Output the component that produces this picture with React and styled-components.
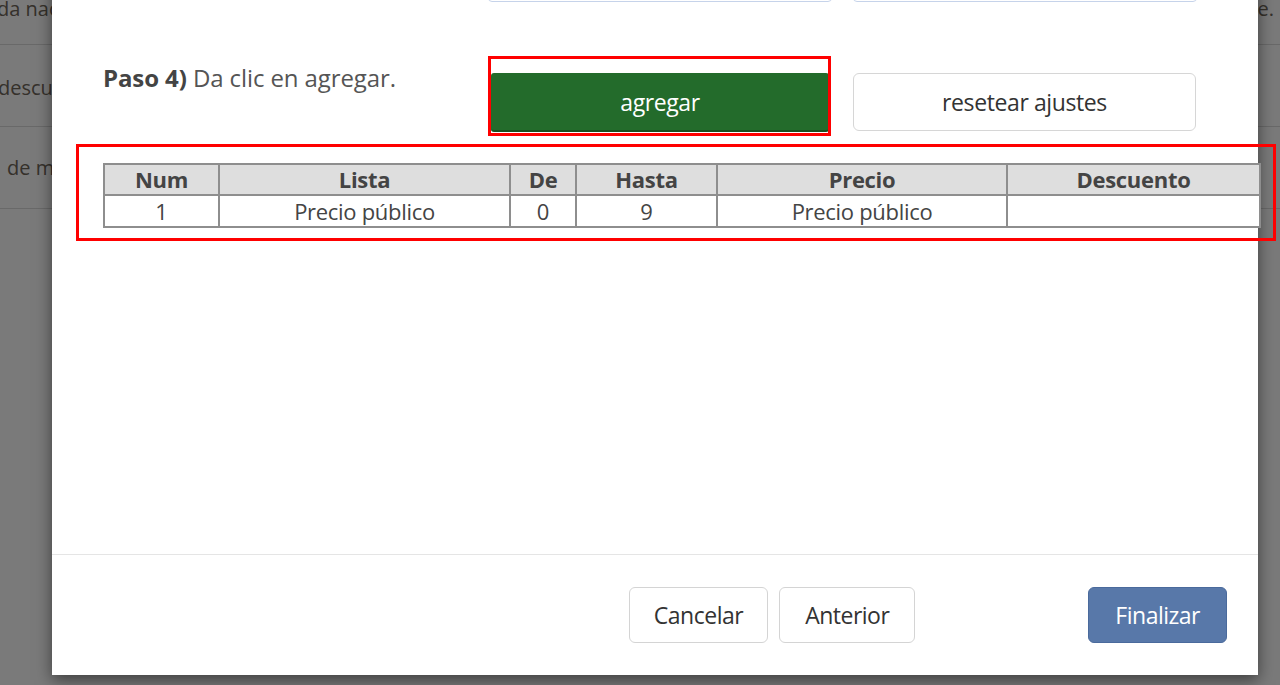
import React from "react";
import styled, { createGlobalStyle } from "styled-components";

const Global = createGlobalStyle`
  html, body { margin: 0; padding: 0; height: 100%; overflow: hidden; background: #fff; }
  body { font-family: "Open Sans", "DejaVu Sans", sans-serif; }
  #root { height: 100%; }
  * { box-sizing: border-box; }
`;

const Page = styled.div`
  position: relative;
  width: 1280px;
  height: 685px;
  overflow: hidden;
  background: #fff;
`;

const BgList = styled.div`
  display: flex;
  flex-direction: column;
  margin-top: -37px;
`;

const BgRow = styled.div`
  height: 82px;
  border-bottom: 1px solid #dcdcdc;
  display: flex;
  align-items: center;
  justify-content: space-between;
  padding-top: ${(p) => p.$shift || 0}px;
  font-size: 20px;
  color: #6f665a;
  white-space: nowrap;
`;

const BgLeft = styled.span`
  margin-left: ${(p) => p.$offset}px;
`;

const BgRight = styled.span`
  margin-right: 6px;
`;

const Overlay = styled.div`
  position: absolute;
  inset: 0;
  background: rgba(0, 0, 0, 0.52);
`;

const Modal = styled.div`
  position: absolute;
  left: 52px;
  top: -40px;
  width: 1206px;
  height: 715px;
  background: #fff;
  box-shadow: 0 5px 15px rgba(0, 0, 0, 0.5);
  display: flex;
  flex-direction: column;
`;

const Body = styled.div`
  flex: 1;
  padding-left: 51px;
`;

const StepGrid = styled.div`
  display: grid;
  grid-template-columns: 364px 344px 344px;
  column-gap: 21px;
  align-items: start;
  margin-top: ${(p) => p.$top || 0}px;
`;

const Input = styled.div`
  height: 42px;
  border: 1px solid #c6d3ea;
  border-radius: 4px;
  background: #fff;
  box-shadow: inset 0 1px 1px rgba(0, 0, 0, 0.05);
`;

const StepLabel = styled.div`
  font-size: 24px;
  line-height: 33px;
  color: #555;
  letter-spacing: -0.1px;
  b {
    color: #444;
    font-weight: 700;
  }
`;

const ButtonCell = styled.div`
  position: relative;
  padding: 12px ${(p) => p.$inset || 0}px 0;
`;

const Highlight = styled.span`
  position: absolute;
  top: ${(p) => p.$t}px;
  left: ${(p) => p.$l}px;
  right: ${(p) => p.$r}px;
  bottom: ${(p) => p.$b}px;
  border: 3px solid #ff0000;
  pointer-events: none;
`;

const AddButton = styled.button`
  display: block;
  width: 100%;
  height: 59px;
  border: none;
  border-bottom: 2px solid #1a5020;
  border-radius: 3px;
  background: #236b2b;
  color: #fff;
  font-family: inherit;
  font-size: 23px;
  letter-spacing: -0.4px;
`;

const ResetButton = styled.button`
  display: block;
  width: 343px;
  height: 58px;
  border: 1px solid #d6d6d6;
  border-radius: 6px;
  background: #fff;
  color: #333;
  font-family: inherit;
  font-size: 23px;
  letter-spacing: -0.4px;
`;

const TableWrap = styled.div`
  position: relative;
  width: 1156px;
  margin-top: 31px;
`;

const Table = styled.table`
  width: 1156px;
  border-collapse: collapse;
  table-layout: fixed;
  border: 2px solid #8e8e8e;
  font-size: 22px;
  color: #444;
  letter-spacing: -0.3px;
`;

const Th = styled.th`
  background: #dedede;
  border: 2px solid #8e8e8e;
  font-weight: 700;
  height: 31px;
  padding: 0;
  line-height: 27px;
  text-align: center;
`;

const Td = styled.td`
  background: #fff;
  border: 2px solid #8e8e8e;
  height: 32px;
  padding: 0;
  line-height: 28px;
  text-align: center;
`;

const Footer = styled.div`
  height: 121px;
  border-top: 1px solid #e5e5e5;
  padding: 32px 31px 0 0;
  display: flex;
  justify-content: flex-end;
  align-items: flex-start;
  gap: 11px;
`;

const FooterButton = styled.button`
  height: 56px;
  padding: 0 ${(p) => p.$pad}px;
  border-radius: 6px;
  border: 1px solid ${(p) => (p.$primary ? "#4a6a9c" : "#d4d4d4")};
  background: ${(p) => (p.$primary ? "#5878a9" : "#fff")};
  color: ${(p) => (p.$primary ? "#fff" : "#333")};
  font-family: inherit;
  font-size: 23px;
  letter-spacing: -0.5px;
  margin-left: ${(p) => p.$gapLeft || 0}px;
`;

const columns = [
  { key: "num", title: "Num", width: 115 },
  { key: "lista", title: "Lista", width: 291 },
  { key: "de", title: "De", width: 66 },
  { key: "hasta", title: "Hasta", width: 141 },
  { key: "precio", title: "Precio", width: 290 },
  { key: "desc", title: "Descuento", width: 253 },
];

const rows = [
  { num: "1", lista: "Precio público", de: "0", hasta: "9", precio: "Precio público", desc: "" },
];

export default function App() {
  return (
    <Page>
      <Global />
      <BgList>
        <BgRow $shift={10}>
          <BgLeft $offset={-3}>da nacional</BgLeft>
          <BgRight>e.</BgRight>
        </BgRow>
        <BgRow $shift={4}>
          <BgLeft $offset={-2}>descuento</BgLeft>
        </BgRow>
        <BgRow>
          <BgLeft $offset={7}>de mayoreo</BgLeft>
        </BgRow>
      </BgList>
      <Overlay />
      <Modal>
        <Body>
          <StepGrid>
            <div />
            <Input />
            <Input />
          </StepGrid>
          <StepGrid $top={59}>
            <StepLabel>
              <b>Paso 4)</b> Da clic en agregar.
            </StepLabel>
            <ButtonCell $inset={3}>
              <AddButton>agregar</AddButton>
              <Highlight $t={-5} $l={0} $r={1} $b={-4} />
            </ButtonCell>
            <ButtonCell>
              <ResetButton>resetear ajustes</ResetButton>
            </ButtonCell>
          </StepGrid>
          <TableWrap>
            <Table>
              <colgroup>
                {columns.map((c) => (
                  <col key={c.key} style={{ width: c.width }} />
                ))}
              </colgroup>
              <thead>
                <tr>
                  {columns.map((c) => (
                    <Th key={c.key}>{c.title}</Th>
                  ))}
                </tr>
              </thead>
              <tbody>
                {rows.map((r, i) => (
                  <tr key={i}>
                    {columns.map((c) => (
                      <Td key={c.key}>{r[c.key]}</Td>
                    ))}
                  </tr>
                ))}
              </tbody>
            </Table>
            <Highlight $t={-19} $l={-27} $r={-17} $b={-13} />
          </TableWrap>
        </Body>
        <Footer>
          <FooterButton $pad={24}>Cancelar</FooterButton>
          <FooterButton $pad={25}>Anterior</FooterButton>
          <FooterButton $pad={26} $primary $gapLeft={162}>
            Finalizar
          </FooterButton>
        </Footer>
      </Modal>
    </Page>
  );
}
